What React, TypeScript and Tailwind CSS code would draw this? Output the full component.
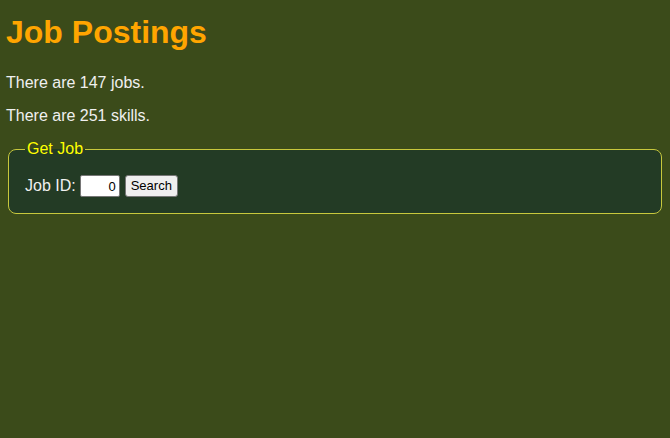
export default function App() {
  return (
    <div className="min-h-[438px] bg-[#3b4b1a] px-[6px] pt-[14px] text-[16px] text-[#f0f0f0]" style={{ fontFamily: '"Liberation Sans", Arial, sans-serif' }}>
      <h1 className="text-[32px] font-bold leading-[37px] text-[#ffa500]">Job Postings</h1>
      <p className="mt-[23px] leading-[18px]">There are 147 jobs.</p>
      <p className="mt-[15px] leading-[18px]">There are 251 skills.</p>
      <fieldset className="mx-[2px] mt-[15px] rounded-[8px] border border-[#c8c83c] bg-[#233b25] px-[16px] pb-[16px] pt-[17px]">
        <legend className="px-[2px] text-[16px] leading-[18px] text-[#ffff00]">Get Job</legend>
        <div className="flex items-center">
          <label className="leading-[18px]">Job ID:</label>
          <input
            type="text"
            defaultValue="0"
            className="ml-[4px] h-[22px] w-[40px] rounded-[2px] border border-[#767676] bg-white px-[3px] text-right text-[13px] text-black outline-none"
            style={{ fontFamily: '"Liberation Sans", Arial, sans-serif' }}
          />
          <button className="ml-[5px] h-[22px] rounded-[3px] border border-[#767676] bg-[#efefef] px-[5px] text-[13px] text-black" style={{ fontFamily: '"Liberation Sans", Arial, sans-serif' }}>
            Search
          </button>
        </div>
      </fieldset>
    </div>
  );
}
